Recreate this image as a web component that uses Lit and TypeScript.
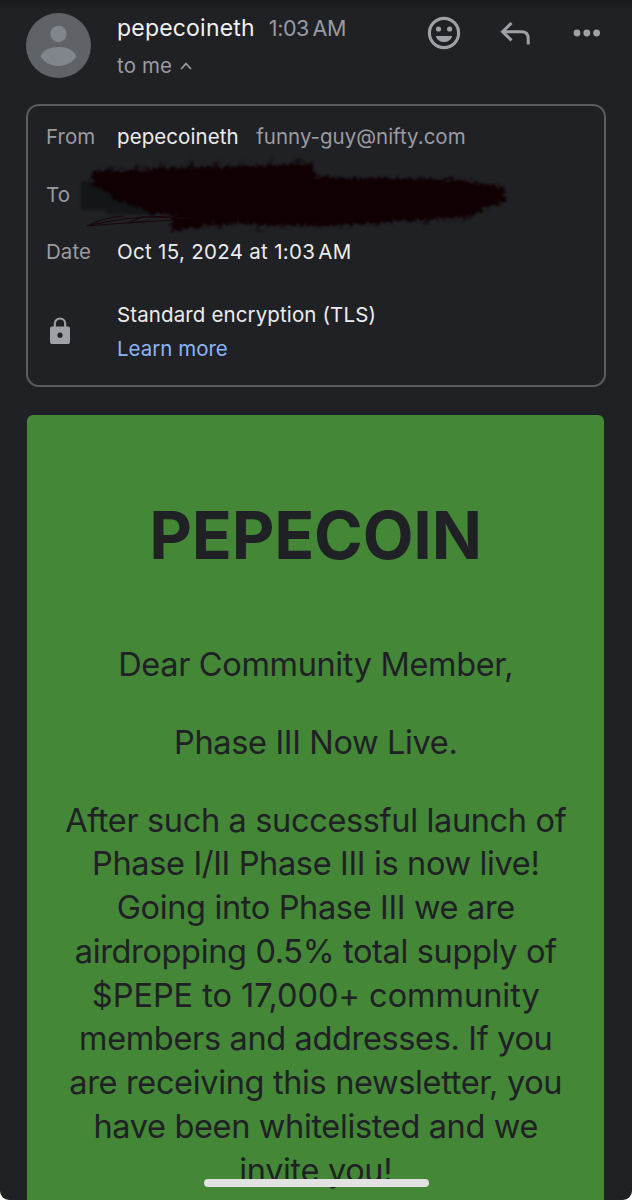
import { LitElement, html, css, svg } from "lit";
import { customElement } from "lit/decorators.js";

const PARAGRAPH = [
  { text: "After such a successful launch of" },
  { text: "Phase I/II Phase III is now live!" },
  { text: "Going into Phase III we are" },
  { text: "airdropping 0.5% total supply of" },
  { text: "$PEPE to 17,000+ community", wide: true },
  { text: "members and addresses. If you" },
  { text: "are receiving this newsletter, you" },
  { text: "have been whitelisted and we" },
  { text: "invite you!" },
];

@customElement("mail-header")
class MailHeader extends LitElement {
  static styles = css`
    :host { display: flex; height: 104px; box-sizing: border-box; padding: 10px 31px 0 26px; color: #9a9ba0; }
    .avatar { width: 65px; height: 65px; margin-top: 3px; flex: none; }
    .who { margin-left: 26px; flex: 1; white-space: nowrap; }
    .line { display: flex; align-items: baseline; height: 37px; line-height: 37px; }
    .line.to { height: 38px; line-height: 38px; font-size: 20.5px; letter-spacing: 0.15px; }
    .name { font-size: 23px; color: #f1f1f3; letter-spacing: 0.2px; }
    .time { font-size: 21.5px; margin-left: 14px; letter-spacing: -0.4px; }
    .caret { width: 12px; height: 8px; margin-left: 8px; align-self: center; }
    .actions { display: flex; align-items: flex-start; }
    .smile { width: 34px; height: 34px; margin-top: 6px; }
    .reply { width: 31px; height: 25px; margin: 11px 0 0 39px; }
    .dots { width: 28px; height: 8px; margin: 19px 0 0 42px; }
    .thin { margin-left: 3.500px; }
    svg { display: block; }
  `;
  render() {
    return html`
      <svg class="avatar" viewBox="0 0 65 65">
        <circle cx="32.5" cy="32.5" r="32.5" fill="#5f6368" />
        <circle cx="32.5" cy="21" r="8.2" fill="#80868b" />
        <path d="M14.5 43.5C17 37 24 34 32.500 34S48 37 50.500 43.500C46.500 49.500 40 53 32.500 53S18.500 49.500 14.500 43.500Z" fill="#80868b" />
      </svg>
      <div class="who">
        <div class="line"><span class="name">pepecoineth</span><span class="time">1:03<span class="thin">AM</span></span></div>
        <div class="line to"><span>to me</span>
          <svg class="caret" viewBox="0 0 12 8"><path d="M1 7L6 1.600L11 7" fill="none" stroke="#9a9ba0" stroke-width="1.700" /></svg>
        </div>
      </div>
      <div class="actions">
        <svg class="smile" viewBox="0 0 34 34" fill="#9fa1a6">
          <circle cx="17" cy="17" r="14.600" fill="none" stroke="#9fa1a6" stroke-width="3.100" />
          <circle cx="11.500" cy="13" r="2.600" /><circle cx="22.600" cy="13" r="2.600" />
          <path d="M8.800 20H25.200C24 24 20.800 26 17 26S10 24 8.800 20Z" />
        </svg>
        <svg class="reply" viewBox="0 0 31 25" fill="none" stroke="#9fa1a6" stroke-width="3">
          <path d="M11.500 2L2.600 10.700L11.500 19.400M2.600 10.700H21.500Q28.200 10.700 28.200 17.400V23.500" />
        </svg>
        <svg class="dots" viewBox="0 0 28 8" fill="#9fa1a6">
          <circle cx="4" cy="4" r="3.400" /><circle cx="13.800" cy="4" r="3.400" /><circle cx="23.600" cy="4" r="3.400" />
        </svg>
      </div>
    `;
  }
}

@customElement("mail-details")
class MailDetails extends LitElement {
  static styles = css`
    :host {
      display: block; box-sizing: border-box; width: 580px; height: 283px; margin-left: 26px;
      border: 2px solid #5b5c60; border-radius: 13px; padding: 2px 18px 0;
      font-size: 20.5px; color: #ececee; white-space: nowrap;
    }
    .row { display: grid; grid-template-columns: 71px 1fr; height: 57.5px; line-height: 58px; position: relative; }
    .label, .mail { color: #9a9ba0; }
    .label { letter-spacing: 0.05px; }
    .from { letter-spacing: 0.08px; }
    .mail { margin-left: 17.500px; letter-spacing: 0; }
    .date { letter-spacing: 0.3px; }
    .thin { margin-left: 3px; }
    .scribble { position: absolute; left: 22px; top: -14px; width: 450px; height: 84px; }
    .tls { display: grid; grid-template-columns: 71px 1fr; margin-top: 17px; line-height: 34.5px; letter-spacing: 0.12px; }
    .lock { display: block; width: 22px; height: 28px; margin: 19px 0 0 3px; }
    .link { color: #8ab4f8; letter-spacing: 0; }
  `;
  render() {
    return html`
      <div class="row"><span class="label">From</span><span><span class="from">pepecoineth</span><span class="mail">funny-guy@nifty.com</span></span></div>
      <div class="row">
        <span class="label">To</span>
        ${this.scribble()}
      </div>
      <div class="row"><span class="label">Date</span><span class="date">Oct 15, 2024 at 1:03<span class="thin">AM</span></span></div>
      <div class="tls">
        <svg class="lock" viewBox="0 0 22 28">
          <path d="M5.800 11V6.700a5.200 5.200 0 0 1 10.400 0V11" fill="none" stroke="#9fa1a6" stroke-width="2.200" />
          <path fill-rule="evenodd" fill="#9fa1a6" d="M3 9.500H19a2 2 0 0 1 2 2V25a2 2 0 0 1-2 2H3a2 2 0 0 1-2-2V11.500a2 2 0 0 1 2-2ZM11 15.600a2.600 2.600 0 1 0 0 5.200a2.600 2.600 0 1 0 0-5.200Z" />
        </svg>
        <div><div>Standard encryption (TLS)</div><div class="link">Learn more</div></div>
      </div>
    `;
  }
  scribble() {
    return html`<svg class="scribble" viewBox="68 152 450 84">
      ${svg`<defs>
        <filter id="rough" x="-5%" y="-20%" width="110%" height="140%" color-interpolation-filters="sRGB">
          <feTurbulence type="fractalNoise" baseFrequency="0.3" numOctaves="3" seed="4" />
          <feDisplacementMap in="SourceGraphic" scale="11" xChannelSelector="R" yChannelSelector="G" />
          <feGaussianBlur stdDeviation="0.8" />
        </filter>
        <filter id="soft" color-interpolation-filters="sRGB"><feGaussianBlur stdDeviation="1.500" /></filter>
      </defs>
      <path filter="url(#soft)" fill="#131618" d="M81 181H150V214H106V210H81Z" />
      <g filter="url(#rough)" fill="#100003">
        <path d="M92 172L100 170L130 171L165 168L200 167L255 166L290 164L312 163L316 176L340 178L400 178L465 180L478 184L504 187L506 202L490 206L480 212L462 217L440 219L400 221L350 225L300 226L240 224L212 224L196 228L172 230L170 221L176 215L150 213L136 206L114 200L108 192L93 187Z" />
        <path d="M110 170L112 167M135 170L139 165M160 168L164 163M190 167L193 162M215 166L219 161M240 165L243 161M268 164L272 160M296 163L300 159M220 224L217 229M260 225L257 230M320 225L317 229M380 222L376 227M430 219L425 224M470 214L464 220" stroke="#100003" stroke-width="3" opacity=".8" />
      </g>
      <path d="M172 217C145 215 110 220 87 226C98 220 112 217 124 216M87 226L150 221M128 223L142 217L190 218M128 223L172 220" fill="none" stroke="#1a070b" stroke-width="1.100" />`}
    </svg>`;
  }
}

@customElement("mail-letter")
class MailLetter extends LitElement {
  static styles = css`
    :host {
      display: block; box-sizing: border-box; width: 577px; height: 785px; margin: 28px 0 0 27px; padding-top: 80px;
      background: #438737; border-radius: 6px 6px 0 0; overflow: hidden; text-align: center; color: #202125;
      font-size: 32.500px; line-height: 43.750px; letter-spacing: -0.35px; white-space: nowrap;
    }
    h1 { margin: 0 0 67.500px; font-size: 66px; line-height: 80px; font-weight: 700; letter-spacing: -0.2px; }
    p { margin: 0 0 34.300px; padding-left: 0.500px; }
    .wide { letter-spacing: -0.03px; }
  `;
  render() {
    return html`
      <h1>PEPECOIN</h1>
      <p>Dear Community Member,</p>
      <p>Phase III Now Live.</p>
      <p>${PARAGRAPH.map((line) => html`<div class=${line.wide ? "wide" : ""}>${line.text}</div>`)}</p>
    `;
  }
}

@customElement("app-root")
class AppRoot extends LitElement {
  static styles = css`
    :host { display: block; background: #fff; font-family: Inter, "Liberation Sans", sans-serif; }
    .screen {
      position: relative; height: 1200px; overflow: hidden; border-radius: 0 0 9px 9px;
      background: linear-gradient(#18191d 0, #1a1b1f 4px, #202125 9px);
    }
    .home { position: absolute; left: 203.500px; top: 1179px; width: 225.500px; height: 8px; border-radius: 4px; background: #e2e2e2; }
  `;
  render() {
    return html`<div class="screen">
      <mail-header></mail-header>
      <mail-details></mail-details>
      <mail-letter></mail-letter>
      <div class="home"></div>
    </div>`;
  }
}
